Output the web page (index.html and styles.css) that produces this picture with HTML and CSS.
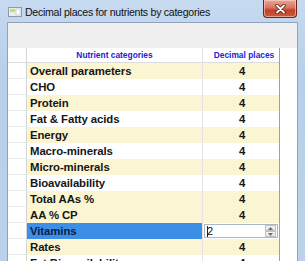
FILE: index.html
```
<!DOCTYPE html>
<html lang="en">
<head>
  <meta charset="UTF-8">
  <title>Decimal places for nutrients by categories</title>
  <link rel="stylesheet" href="styles.css">
</head>
<body>
  <div class="window">
    <div class="titlebar">
      <svg class="app-icon" width="14" height="10" viewBox="0 0 14 10">
        <rect x="0.5" y="0.5" width="13" height="9" fill="#e9eef2" stroke="#8f9aa6"/>
        <rect x="2" y="2" width="5" height="3" fill="#c9d96a"/>
        <rect x="8" y="2" width="4" height="6" fill="#ffffff" stroke="#b6c0ca" stroke-width="0.6"/>
      </svg>
      <span class="title">Decimal places for nutrients by categories</span>
      <div class="close">
        <svg width="11" height="10" viewBox="0 0 11 10">
          <path d="M2 1.5 L9 8.5 M9 1.5 L2 8.5" stroke="#5a1a12" stroke-width="3.4" stroke-linecap="round"/>
          <path d="M2 1.5 L9 8.5 M9 1.5 L2 8.5" stroke="#ffffff" stroke-width="1.8" stroke-linecap="round"/>
        </svg>
      </div>
    </div>

    <div class="client">
      <div class="toolbar"></div>

      <div class="grid">
        <div class="row head">
          <div class="cell rowhead"></div>
          <div class="cell name">Nutrient categories</div>
          <div class="cell value">Decimal places</div>
        </div>

        <div class="row alt">
          <div class="cell rowhead"></div>
          <div class="cell name">Overall parameters</div>
          <div class="cell value">4</div>
        </div>
        <div class="row">
          <div class="cell rowhead"></div>
          <div class="cell name">CHO</div>
          <div class="cell value">4</div>
        </div>
        <div class="row alt">
          <div class="cell rowhead"></div>
          <div class="cell name">Protein</div>
          <div class="cell value">4</div>
        </div>
        <div class="row">
          <div class="cell rowhead"></div>
          <div class="cell name">Fat &amp; Fatty acids</div>
          <div class="cell value">4</div>
        </div>
        <div class="row alt">
          <div class="cell rowhead"></div>
          <div class="cell name">Energy</div>
          <div class="cell value">4</div>
        </div>
        <div class="row">
          <div class="cell rowhead"></div>
          <div class="cell name">Macro-minerals</div>
          <div class="cell value">4</div>
        </div>
        <div class="row alt">
          <div class="cell rowhead"></div>
          <div class="cell name">Micro-minerals</div>
          <div class="cell value">4</div>
        </div>
        <div class="row">
          <div class="cell rowhead"></div>
          <div class="cell name">Bioavailability</div>
          <div class="cell value">4</div>
        </div>
        <div class="row alt">
          <div class="cell rowhead"></div>
          <div class="cell name">Total AAs %</div>
          <div class="cell value">4</div>
        </div>
        <div class="row alt">
          <div class="cell rowhead"></div>
          <div class="cell name">AA % CP</div>
          <div class="cell value">4</div>
        </div>
        <div class="row selected">
          <div class="cell rowhead"></div>
          <div class="cell name">Vitamins</div>
          <div class="cell editor">
            <span class="edit-text">2</span>
            <span class="caret"></span>
            <span class="spin">
              <span class="spin-btn"><svg width="5" height="3" viewBox="0 0 5 3"><path d="M0 3 L2.5 0 L5 3 Z" fill="#6d6d6d"/></svg></span>
              <span class="spin-btn"><svg width="5" height="3" viewBox="0 0 5 3"><path d="M0 0 L5 0 L2.5 3 Z" fill="#6d6d6d"/></svg></span>
            </span>
          </div>
        </div>
        <div class="row alt">
          <div class="cell rowhead"></div>
          <div class="cell name">Rates</div>
          <div class="cell value">4</div>
        </div>
        <div class="row">
          <div class="cell rowhead"></div>
          <div class="cell name">Fat Bioavailability</div>
          <div class="cell value">4</div>
        </div>
      </div>
    </div>
  </div>
</body>
</html>
```

FILE: styles.css
```
html, body {
  margin: 0;
  padding: 0;
}

body {
  width: 305px;
  height: 261px;
  overflow: hidden;
  font-family: "Liberation Sans", Arial, sans-serif;
  background: linear-gradient(180deg, #c6daf0 0%, #b8cfe9 30%, #bcd2ea 100%);
}

.window {
  display: flex;
  flex-direction: column;
  height: 261px;
}

/* title bar */
.titlebar {
  height: 22px;
  display: flex;
  align-items: flex-start;
  padding: 0 8px 0 8px;
}

.app-icon {
  margin-top: 7px;
  flex: none;
}

.title {
  margin-left: 3px;
  margin-top: 6px;
  font-size: 10.6px;
  letter-spacing: -0.28px;
  color: #111;
  white-space: nowrap;
}

.close {
  margin-left: auto;
  width: 32px;
  height: 17px;
  border: 1px solid #6b2418;
  border-top: none;
  border-radius: 0 0 4px 4px;
  background: linear-gradient(180deg, #e9a697 0%, #d9755f 45%, #c1402a 60%, #cf5a3c 100%);
  box-shadow: inset 0 0 0 1px rgba(255, 220, 210, 0.55);
  display: flex;
  align-items: center;
  justify-content: center;
}

/* client area */
.client {
  flex: 1;
  margin: 0 7px;
  border: 1px solid #8fa3bd;
  border-bottom: none;
  background: #fff;
  overflow: hidden;
}

.toolbar {
  height: 25px;
  background: #f0f0f0;
}

.grid {
  width: 271px;
  border-right: 1px solid #a0a0a0;
}

.row {
  display: grid;
  grid-template-columns: 19px 176px 76px;
  height: 16px;
  background: #fff;
}

.row.alt .name,
.row.alt .value {
  background: #fcf5d3;
}

.cell {
  box-sizing: border-box;
  height: 16px;
  line-height: 16px;
  white-space: nowrap;
  overflow: hidden;
  color: #161616;
  font-weight: bold;
  font-size: 11.4px;
  letter-spacing: -0.1px;
}

.rowhead {
  border-right: 1px solid #d4d4d4;
  border-bottom: 1px solid #ececec;
  background: #fff;
}

.name {
  padding-left: 3px;
  border-right: 1px solid #e2e2e2;
}

.value {
  text-align: center;
  padding-left: 2px;
}

.row.head {
  height: 15px;
}

.row.head .cell {
  height: 15px;
  line-height: 15px;
  font-size: 8.4px;
  color: #2323d4;
  text-align: center;
  letter-spacing: 0;
  border-bottom: 1px solid #dcdcdc;
}

.row.head .name {
  padding-left: 0;
}

.row.head .value {
  padding-left: 6px;
}

/* selected row */
.row.selected .name {
  background: #3d8ee6;
  color: #0b1f4a;
}

.editor {
  display: flex;
  align-items: center;
  margin: 1px 1px 1px 1px;
  height: 14px;
  border: 1px solid #aab7c8;
  background: #fff;
  position: relative;
}

.edit-text {
  font-size: 11px;
  font-weight: normal;
  color: #111;
  padding-left: 2px;
}

.caret {
  position: absolute;
  left: 2px;
  top: 1px;
  width: 1px;
  height: 11px;
  background: #222;
}

.spin {
  margin-left: auto;
  display: flex;
  flex-direction: column;
  width: 11px;
  height: 12px;
  margin-right: 1px;
}

.spin-btn {
  flex: 1;
  display: flex;
  align-items: center;
  justify-content: center;
  background: linear-gradient(180deg, #f6f6f6, #e2e2e2);
  border: 1px solid #c2c2c2;
  box-sizing: border-box;
}
```
